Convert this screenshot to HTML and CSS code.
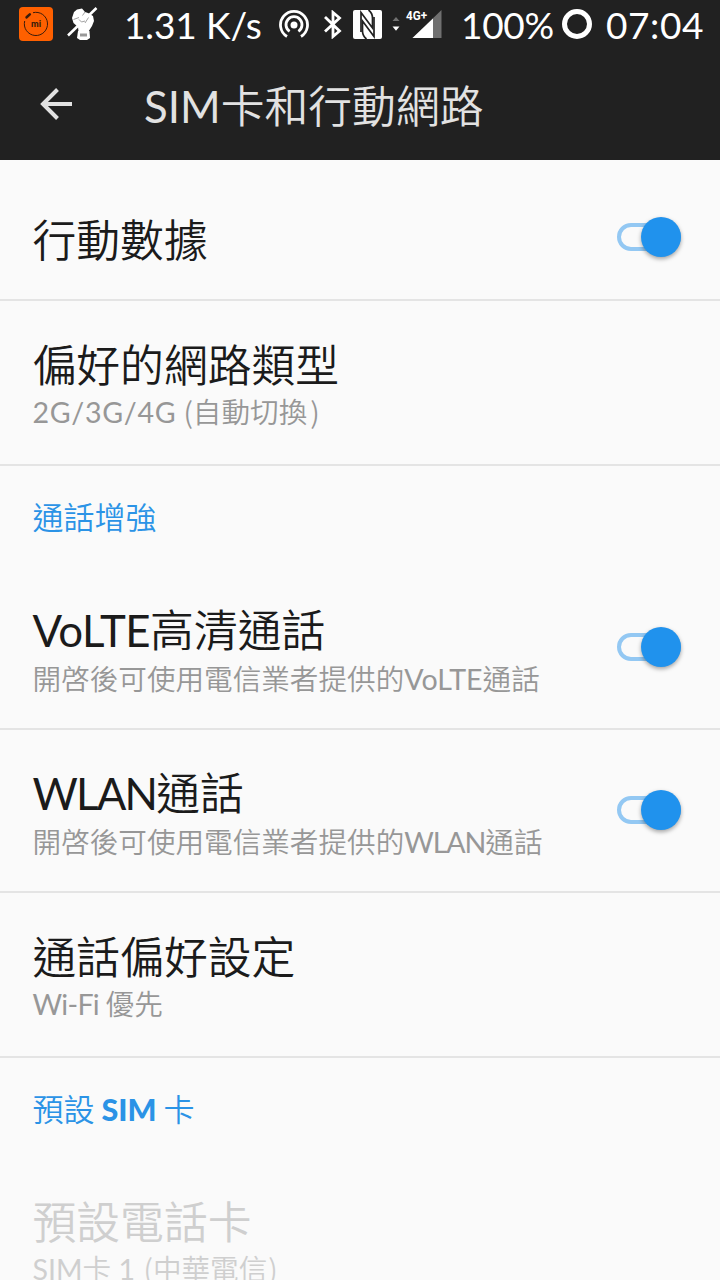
FILE: index.html
```html
<!DOCTYPE html>
<html lang="zh-Hant">
  <head>
    <meta charset="UTF-8" />
    <meta name="viewport" content="width=device-width, initial-scale=1.0">
    <title>SIM卡和行動網路</title>
    <link rel="stylesheet" href="styles.css">
  </head>
  <body>
    <div class="statusbar">
      <svg class="ic-mi" width="34" height="34" viewBox="0 0 34 34">
        <rect width="34" height="34" rx="4" fill="#ff6000" />
        <path d="M14 5.700A11.600 11.600 0 1 1 5.700 14" fill="none" stroke="#3a1c0c" stroke-width="1" />
        <path d="M7.600 10.300L10.800 7.400" stroke="#3a1c0c" stroke-width="2.600" stroke-linecap="round" />
        <text x="17" y="19.500" text-anchor="middle" textLength="10" lengthAdjust="spacingAndGlyphs" class="mi-text">mi</text>
      </svg>
      <svg class="ic-glove" width="31" height="34" viewBox="0 0 31 34">
        <path d="M1 28.500L29.500 1" stroke="#fff" stroke-width="2.600" />
        <path d="M5 11L7 5L10 2.500L15 1.500L18 5L21 6L26 9L27 14L25 19L21.500 24.500L11.500 24.500L11 20L6.500 16z" fill="#fff" />
        <path d="M11 24h11.500l.5 7-3 2h-7l-3-2z" fill="#fff" />
        <path d="M13 26.500h7v3h-7z" fill="#999" />
        <path d="M6.500 12.500L12 10.500M18 5L15.500 8.500M12 12.500L14.500 15L18 14M18 16L21.500 10.500" fill="none" stroke="#888" stroke-width=".8" />
      </svg>
      <span class="speed">1.31 K/s</span>
      <svg class="ic-hotspot" width="30" height="28" viewBox="0 0 30 28">
        <g fill="none" stroke="#fff" stroke-width="2.800">
          <path d="M8 26.500A13.500 13.500 0 1 1 22 26.500" />
          <path d="M10.600 21.400A8 8 0 1 1 19.400 21.400" />
        </g>
        <circle cx="15" cy="15" r="3.500" fill="#fff" />
      </svg>
      <svg class="ic-bt" width="19" height="29" viewBox="0 0 19 29">
        <path d="M2 7L16.500 21L10 26.500V2.500L16.500 8L2 21.500" fill="none" stroke="#fff" stroke-width="2.800" />
      </svg>
      <svg class="ic-nfc" width="29" height="29" viewBox="0 0 29 29">
        <rect width="29" height="29" rx="2" fill="#fff" />
        <g fill="none" stroke="#212121" stroke-width="1.700">
          <path d="M8 22V2.500L19.500 18V8Q19.500 3 15.500 0" />
          <path d="M21 7V26.500L9.500 11V21Q9.500 26 13.500 29" />
        </g>
      </svg>
      <svg class="ic-data" width="8" height="14" viewBox="0 0 8 14">
        <path d="M4 0L7.500 4H.5z" fill="#707070" />
        <path d="M.5 9.500h7L4 13.800z" fill="#fff" />
      </svg>
      <svg class="ic-signal" width="36" height="30" viewBox="0 0 36 30">
        <path d="M35.500 1V29H6.500z" fill="#707070" />
        <path d="M27 9.500V29H6.500z" fill="#fff" />
        <text x="0" y="10.800" textLength="21" lengthAdjust="spacingAndGlyphs" class="net-text">4G+</text>
      </svg>
      <span class="battery">100%</span>
      <span class="battery-ring"></span>
      <span class="clock">07:04</span>
    </div>

    <div class="toolbar">
      <svg class="back" width="32" height="32" viewBox="0 0 32 32">
        <path d="M32 16H3M17.500 1.500L3 16L17.500 30.500" fill="none" stroke="#e2e2e2" stroke-width="4" />
      </svg>
      <h1><span class="en">SIM</span>卡和行動網路</h1>
    </div>

    <div class="list">
      <div class="row first">
        <div class="text">
          <p class="title">行動數據</p>
        </div>
        <div class="switch"></div>
      </div>
      <div class="row tall">
        <div class="text">
          <p class="title">偏好的網路類型</p>
          <p class="sub"><span class="en net">2G/3G/4G</span><span class="paren">(</span>自動切換<span class="paren">)</span></p>
        </div>
      </div>

      <h2>通話增強</h2>
      <div class="row">
        <div class="text">
          <p class="title"><span class="en volte">VoLTE</span>高清通話</p>
          <p class="sub">開啓後可使用電信業者提供的<span class="en">VoLTE</span>通話</p>
        </div>
        <div class="switch"></div>
      </div>
      <div class="row">
        <div class="text">
          <p class="title"><span class="en wlan">WLAN</span>通話</p>
          <p class="sub">開啓後可使用電信業者提供的<span class="en wlan-sub">WLAN</span>通話</p>
        </div>
        <div class="switch"></div>
      </div>
      <div class="row tall">
        <div class="text">
          <p class="title">通話偏好設定</p>
          <p class="sub"><span class="en wifi">Wi-Fi </span>優先</p>
        </div>
      </div>

      <h2>預設 <b class="en">SIM</b> 卡</h2>
      <div class="row disabled">
        <div class="text">
          <p class="title">預設電話卡</p>
          <p class="sub"><span class="en">SIM</span>卡<span class="en"> 1 </span><span class="paren">(</span>中華電信<span class="paren">)</span></p>
        </div>
      </div>
    </div>
  </body>
</html>
```
FILE: styles.css
```css
html, body {
  height: 100%;
  margin: 0;
  overflow: hidden;
}

body {
  background: #fafafa;
  font-family: "Noto Sans CJK TC", sans-serif;
  font-weight: 350;
  color: #1b1b1b;
}

h1, h2, p {
  margin: 0;
  font-weight: inherit;
  white-space: nowrap;
}

svg {
  display: block;
  flex: none;
}

.en {
  font-family: Lato, sans-serif;
  font-weight: 400;
}

/* status bar */
.statusbar {
  display: flex;
  align-items: flex-start;
  box-sizing: border-box;
  height: 50px;
  background: #212121;
  color: #fff;
  font-family: Lato, sans-serif;
  font-weight: 400;
  font-size: 37px;
  line-height: 49px;
  white-space: nowrap;
}

.ic-mi {
  margin: 7px 0 0 19px;
}

.mi-text {
  font: 900 9px Lato, sans-serif;
  fill: #3a1c0c;
}

.ic-glove {
  margin: 7px 0 0 14px;
}

.speed {
  width: 142px;
  margin-left: 26px;
  letter-spacing: -0.1px;
}

.ic-hotspot {
  margin: 10px 0 0 13px;
}

.ic-bt {
  margin: 10px 0 0 14px;
}

.ic-nfc {
  margin: 10px 0 0 11px;
}

.ic-data {
  margin: 17px 0 0 10px;
}

.ic-signal {
  margin: 9px 0 0 6px;
  overflow: visible;
}

.net-text {
  font: bold 13.500px Roboto, sans-serif;
  fill: #fff;
}

.battery {
  width: 94px;
  margin-left: 19px;
  letter-spacing: -0.3px;
}

.battery-ring {
  box-sizing: border-box;
  width: 30px;
  height: 30px;
  margin: 9px 0 0 7px;
  border: 5px solid #fff;
  border-radius: 50%;
}

.clock {
  margin-left: 14px;
  letter-spacing: 0.6px;
}

/* toolbar */
.toolbar {
  display: flex;
  align-items: center;
  height: 110px;
  background: #212121;
  color: #e2e2e2;
}

.back {
  margin: 0 0 2px 40px;
}

.toolbar h1 {
  margin-left: 72px;
  font-size: 43.800px;
  line-height: 60px;
}

/* settings list */
.row {
  display: flex;
  justify-content: space-between;
  box-sizing: border-box;
  height: 163px;
  padding: 31px 39px 0 32.500px;
  border-bottom: 2px solid #e4e4e4;
}

.row.tall {
  height: 165px;
  padding-top: 32px;
}

.row.first {
  height: 141px;
  padding-top: 48px;
}

.title {
  font-size: 43.800px;
  line-height: 60px;
}

.sub {
  font-size: 28.600px;
  line-height: 36px;
  color: #979797;
}

.volte {
  letter-spacing: -0.5px;
}

.wlan {
  letter-spacing: -1.800px;
}

.wlan-sub {
  letter-spacing: -1.100px;
}

.wifi {
  letter-spacing: -0.7px;
}

.net {
  letter-spacing: 0.7px;
}

/* air around the brackets */
.paren {
  margin-left: 7px;
}

.paren + .paren {
  margin-left: 3px;
}

.row.disabled {
  padding-top: 31px;
  border: 0;
}

.row.disabled p {
  color: #cfcfcf;
}

.row.disabled .paren {
  margin-left: 1px;
}

h2 {
  height: 71px;
  padding: 30px 0 0 32.500px;
  font-size: 31px;
  line-height: 40px;
  color: #2b93e6;
}

h2 b.en {
  font-weight: 900;
  font-size: 30.500px;
}

.switch {
  position: relative;
  box-sizing: border-box;
  width: 64px;
  height: 28px;
  margin-top: 35px;
  border: 4px solid #93c8f3;
  border-radius: 14px;
}

.row.first .switch {
  margin-top: 15px;
}

.switch::after {
  content: "";
  position: absolute;
  top: -10px;
  right: -4px;
  width: 40px;
  height: 40px;
  border-radius: 50%;
  background: #2092ed;
  box-shadow: 0 2px 4px rgba(0, 0, 0, 0.35);
}
```
